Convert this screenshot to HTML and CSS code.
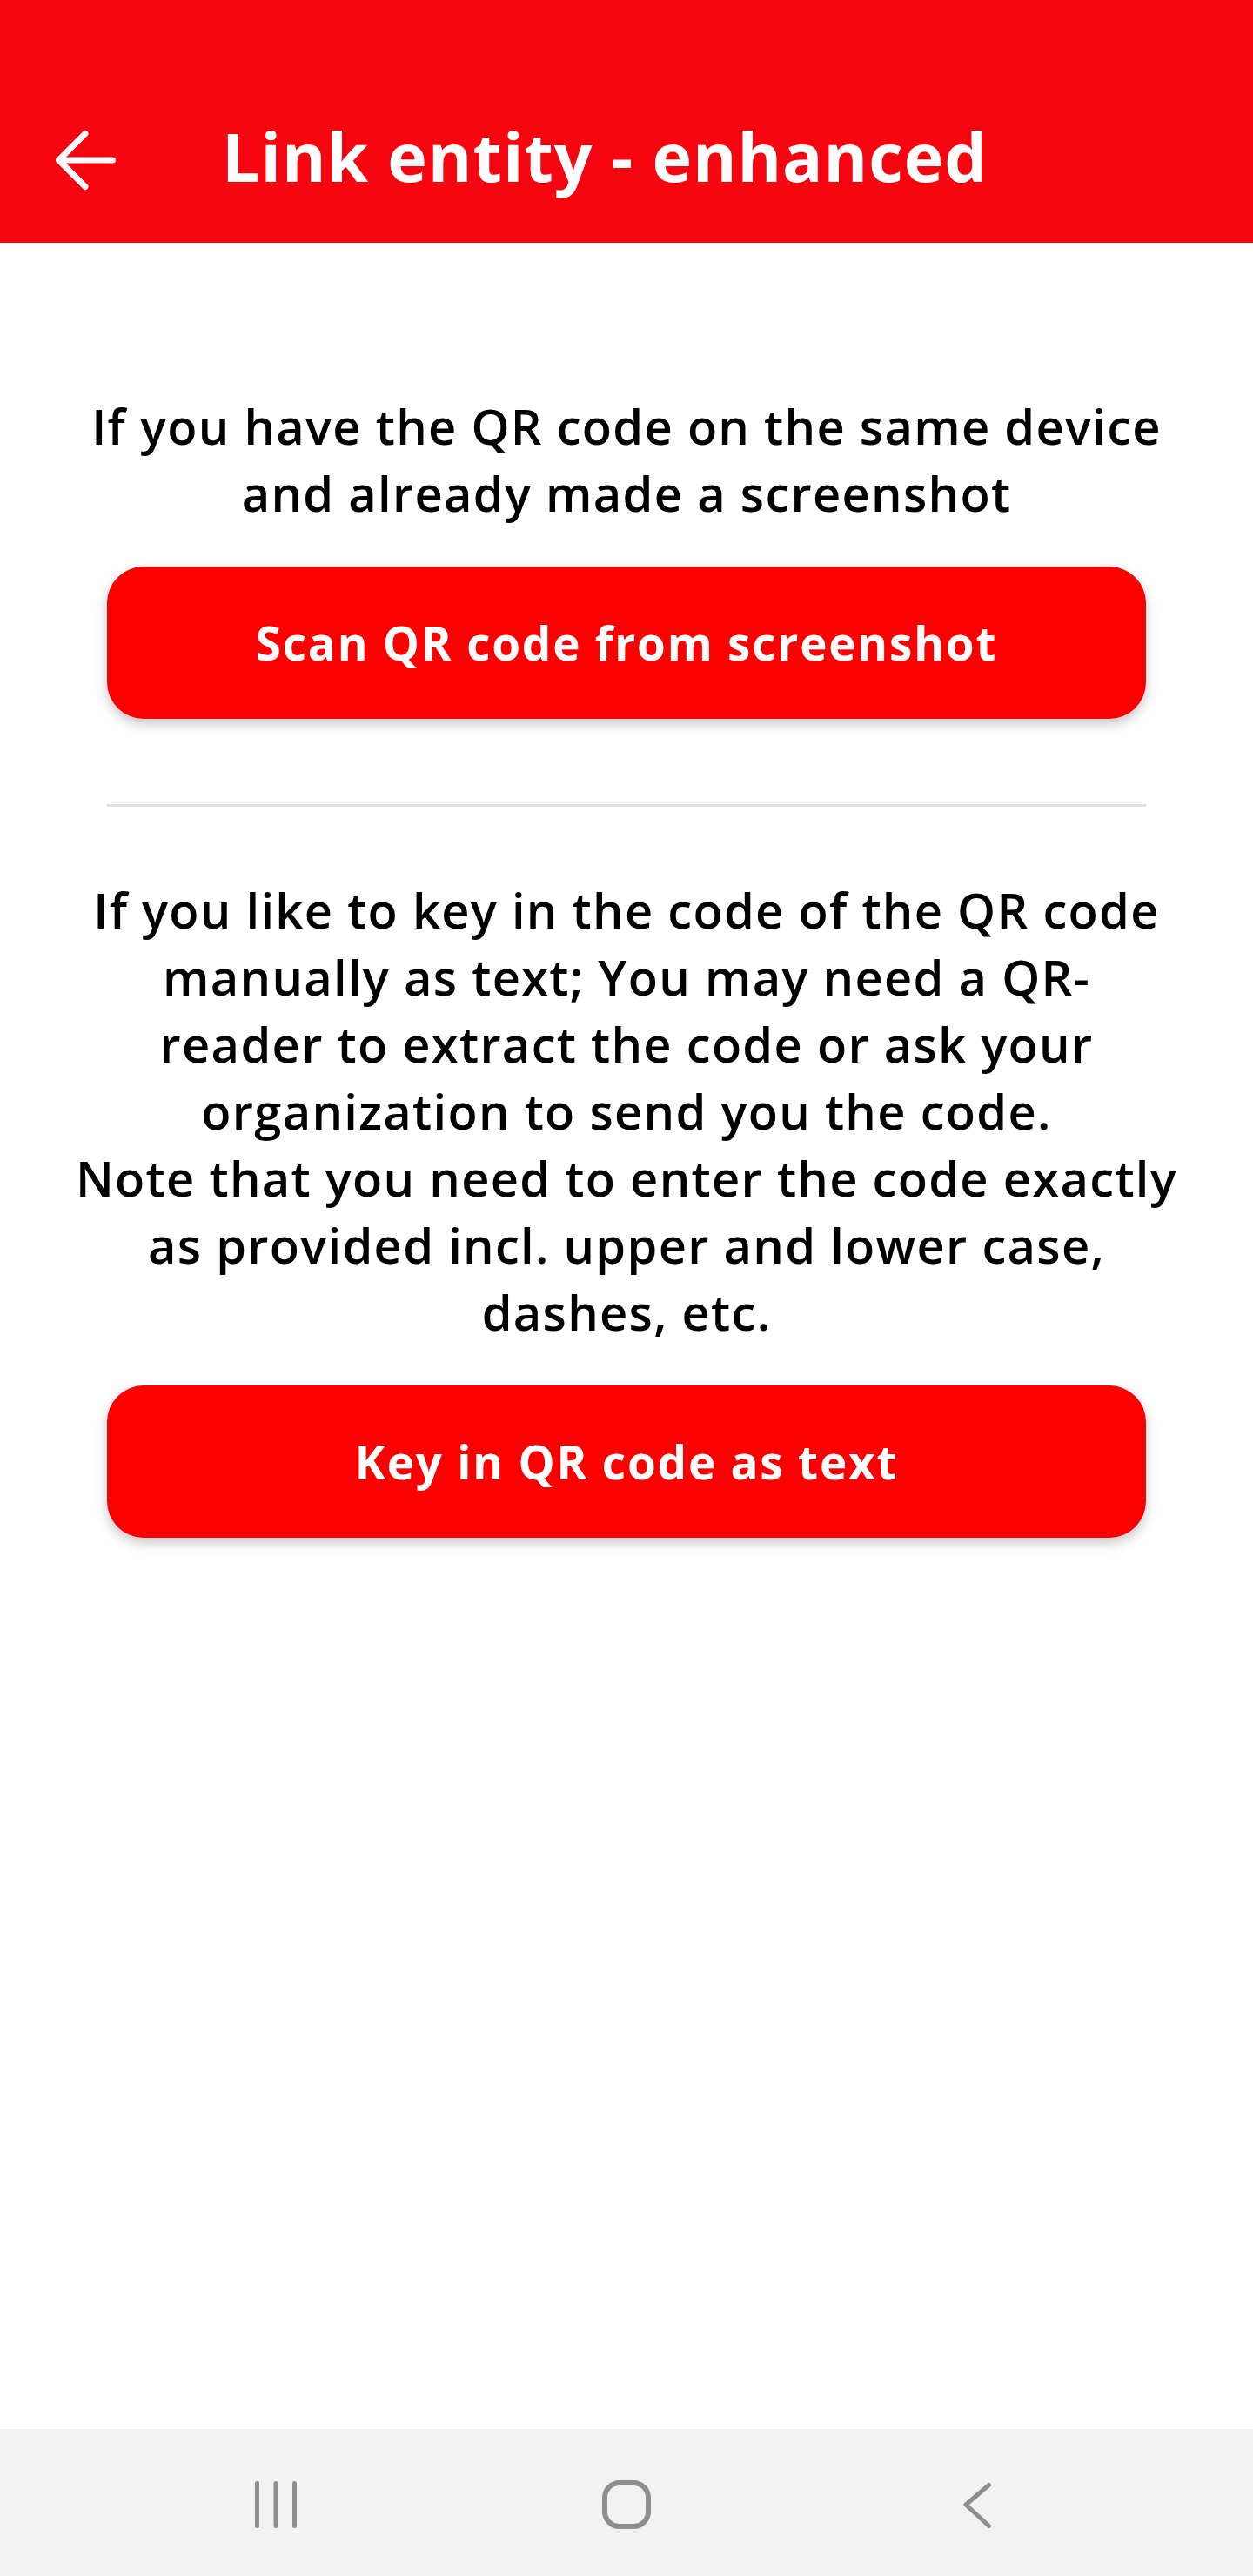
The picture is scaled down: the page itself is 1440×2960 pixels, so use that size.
FILE: index.html
```html
<!DOCTYPE html>
<html lang="en">
<head>
<meta charset="utf-8">
<title>Link entity - enhanced</title>
<link rel="stylesheet" href="styles.css">
</head>
<body>
<div class="screen">
  <header class="appbar">
    <svg class="back" width="78" height="78" viewBox="0 0 78 78" aria-hidden="true">
      <path d="M7.5 39H69.5M38 8.5L7.5 39L38 69.5" fill="none" stroke="#fff" stroke-width="7" stroke-linecap="round" stroke-linejoin="round"/>
    </svg>
    <h1 class="title">Link entity - enhanced</h1>
  </header>
  <main class="content">
    <p class="msg msg-first">If you have the QR code on the same device<br>and already made a screenshot</p>
    <button class="btn">Scan QR code from screenshot</button>
    <div class="divider"></div>
    <p class="msg msg-second">If you like to key in the code of the QR code<br>manually as text; You may need a QR-<br>reader to extract the code or ask your<br>organization to send you the code.<br>Note that you need to enter the code exactly<br>as provided incl. upper and lower case,<br>dashes, etc.</p>
    <button class="btn">Key in QR code as text</button>
  </main>
  <nav class="navbar">
    <div class="navcell">
      <svg width="52" height="56" viewBox="0 0 52 56" aria-hidden="true">
        <path d="M4.5 3.5V52.5M26 3.5V52.5M47.5 3.5V52.5" fill="none" stroke="#8e8e8e" stroke-width="5" stroke-linecap="round"/>
      </svg>
    </div>
    <div class="navcell">
      <svg width="60" height="60" viewBox="0 0 60 60" aria-hidden="true">
        <rect x="5" y="5" width="50" height="50" rx="17" fill="none" stroke="#8e8e8e" stroke-width="6"/>
      </svg>
    </div>
    <div class="navcell">
      <svg width="40" height="56" viewBox="0 0 40 56" aria-hidden="true">
        <path d="M33.5 5.5L7 28L33.5 52.5" fill="none" stroke="#8e8e8e" stroke-width="5" stroke-linecap="round" stroke-linejoin="round"/>
      </svg>
    </div>
  </nav>
</div>
</body>
</html>
```
FILE: styles.css
```css
* { box-sizing: border-box; }
html, body { margin: 0; padding: 0; background: #fff; }
body { font-family: "Open Sans", "Noto Sans", sans-serif; color: #000; }
.screen { width: 1440px; height: 2960px; display: flex; flex-direction: column; overflow: hidden; }

.appbar {
  height: 279px;
  padding-top: 88px;
  background: #f4050f;
  display: flex;
  align-items: center;
  flex-shrink: 0;
}
.back { margin-left: 60px; flex-shrink: 0; display: block; }
.title {
  margin: 0 0 0 117px;
  font-size: 77px;
  line-height: 1;
  font-weight: 700;
  letter-spacing: 1px;
  color: #fff;
  position: relative;
  top: -4px;
  white-space: nowrap;
}

.content {
  flex: 1;
  display: flex;
  flex-direction: column;
  align-items: center;
  padding: 172px 0 0;
}
.msg {
  margin: 0;
  font-size: 56px;
  line-height: 77px;
  font-weight: 600;
  letter-spacing: 1.3px;
  text-align: center;
  white-space: nowrap;
}
.msg-second { margin-top: 80px; }

.btn {
  width: 1194px;
  height: 175px;
  margin-top: 46px;
  border: 0;
  border-radius: 42px;
  background: #fa0000;
  color: #fff;
  font-family: "Open Sans", "Noto Sans", sans-serif;
  font-size: 53px;
  font-weight: 700;
  letter-spacing: 1.8px;
  box-shadow: 0 6px 14px rgba(0, 0, 0, 0.22);
  flex-shrink: 0;
}
.divider {
  width: 1194px;
  height: 3px;
  margin-top: 98px;
  background: #e2e2e2;
  flex-shrink: 0;
}

.navbar {
  height: 169px;
  flex-shrink: 0;
  background: #f2f2f2;
  display: grid;
  grid-template-columns: repeat(3, 403px);
  justify-content: center;
  align-items: center;
  padding-top: 5px;
}
.navcell { display: flex; justify-content: center; align-items: center; }
.navcell svg { display: block; }
```
